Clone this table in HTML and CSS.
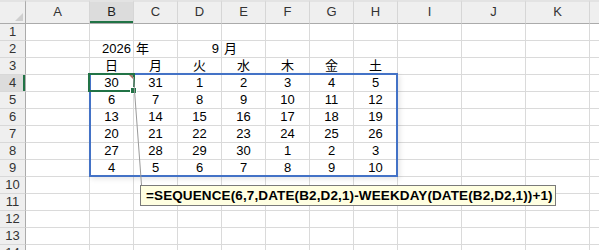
FILE: index.html
```html
<!DOCTYPE html>
<html lang="ja">
<head>
<meta charset="utf-8">
<title>SEQUENCE カレンダー</title>
<link rel="stylesheet" href="styles.css">
</head>
<body>
<div class="sheet">
  <div class="row head">
    <div class="c corner"><span class="tri"></span></div>
    <div class="c">A</div><div class="c sel-col">B</div><div class="c">C</div><div class="c">D</div><div class="c">E</div><div class="c">F</div><div class="c">G</div><div class="c">H</div><div class="c">I</div><div class="c">J</div><div class="c">K</div><div class="c"></div>
  </div>
  <div class="row"><div class="c rh">1</div><div class="c"></div><div class="c"></div><div class="c"></div><div class="c"></div><div class="c"></div><div class="c"></div><div class="c"></div><div class="c"></div><div class="c"></div><div class="c"></div><div class="c"></div><div class="c"></div></div>
  <div class="row"><div class="c rh">2</div><div class="c"></div><div class="c r">2026</div><div class="c l">年</div><div class="c r">9</div><div class="c l">月</div><div class="c"></div><div class="c"></div><div class="c"></div><div class="c"></div><div class="c"></div><div class="c"></div><div class="c"></div></div>
  <div class="row"><div class="c rh">3</div><div class="c"></div><div class="c m">日</div><div class="c m">月</div><div class="c m">火</div><div class="c m">水</div><div class="c m">木</div><div class="c m">金</div><div class="c m">土</div><div class="c"></div><div class="c"></div><div class="c"></div><div class="c"></div></div>
  <div class="row"><div class="c rh sel-row">4</div><div class="c"></div><div class="c m">30</div><div class="c m">31</div><div class="c m">1</div><div class="c m">2</div><div class="c m">3</div><div class="c m">4</div><div class="c m">5</div><div class="c"></div><div class="c"></div><div class="c"></div><div class="c"></div></div>
  <div class="row"><div class="c rh">5</div><div class="c"></div><div class="c m">6</div><div class="c m">7</div><div class="c m">8</div><div class="c m">9</div><div class="c m">10</div><div class="c m">11</div><div class="c m">12</div><div class="c"></div><div class="c"></div><div class="c"></div><div class="c"></div></div>
  <div class="row"><div class="c rh">6</div><div class="c"></div><div class="c m">13</div><div class="c m">14</div><div class="c m">15</div><div class="c m">16</div><div class="c m">17</div><div class="c m">18</div><div class="c m">19</div><div class="c"></div><div class="c"></div><div class="c"></div><div class="c"></div></div>
  <div class="row"><div class="c rh">7</div><div class="c"></div><div class="c m">20</div><div class="c m">21</div><div class="c m">22</div><div class="c m">23</div><div class="c m">24</div><div class="c m">25</div><div class="c m">26</div><div class="c"></div><div class="c"></div><div class="c"></div><div class="c"></div></div>
  <div class="row"><div class="c rh">8</div><div class="c"></div><div class="c m">27</div><div class="c m">28</div><div class="c m">29</div><div class="c m">30</div><div class="c m">1</div><div class="c m">2</div><div class="c m">3</div><div class="c"></div><div class="c"></div><div class="c"></div><div class="c"></div></div>
  <div class="row"><div class="c rh">9</div><div class="c"></div><div class="c m">4</div><div class="c m">5</div><div class="c m">6</div><div class="c m">7</div><div class="c m">8</div><div class="c m">9</div><div class="c m">10</div><div class="c"></div><div class="c"></div><div class="c"></div><div class="c"></div></div>
  <div class="row"><div class="c rh">10</div><div class="c"></div><div class="c"></div><div class="c"></div><div class="c"></div><div class="c"></div><div class="c"></div><div class="c"></div><div class="c"></div><div class="c"></div><div class="c"></div><div class="c"></div><div class="c"></div></div>
  <div class="row"><div class="c rh">11</div><div class="c"></div><div class="c"></div><div class="c"></div><div class="c"></div><div class="c"></div><div class="c"></div><div class="c"></div><div class="c"></div><div class="c"></div><div class="c"></div><div class="c"></div><div class="c"></div></div>
  <div class="row"><div class="c rh">12</div><div class="c"></div><div class="c"></div><div class="c"></div><div class="c"></div><div class="c"></div><div class="c"></div><div class="c"></div><div class="c"></div><div class="c"></div><div class="c"></div><div class="c"></div><div class="c"></div></div>
  <div class="row"><div class="c rh">13</div><div class="c"></div><div class="c"></div><div class="c"></div><div class="c"></div><div class="c"></div><div class="c"></div><div class="c"></div><div class="c"></div><div class="c"></div><div class="c"></div><div class="c"></div><div class="c"></div></div>
  <div class="row"><div class="c rh">14</div><div class="c"></div><div class="c"></div><div class="c"></div><div class="c"></div><div class="c"></div><div class="c"></div><div class="c"></div><div class="c"></div><div class="c"></div><div class="c"></div><div class="c"></div><div class="c"></div></div>

  <div class="spill"></div>
  <div class="selbox"></div>
  <div class="handle"></div>
  <svg class="callout" width="20" height="120" viewBox="0 0 20 120">
    <polygon points="1,2 5,2 5,6" fill="#b0705a"/>
    <polygon points="3,2 5,2 5,4" fill="#8c8c8c"/>
    <line x1="5.5" y1="4" x2="13.5" y2="112" stroke="#9a9a9a" stroke-width="1"/>
  </svg>
  <div class="tip">=SEQUENCE(6,7,DATE(B2,D2,1)-WEEKDAY(DATE(B2,D2,1))+1)</div>
</div>
</body>
</html>
```

FILE: styles.css
```css
html, body {
  margin: 0;
  padding: 0;
  background: #ffffff;
  overflow: hidden;
}

.sheet {
  position: relative;
  width: 660px;
  height: 250px;
  font-family: "Liberation Sans", "Noto Sans CJK JP", sans-serif;
  font-size: 13px;
  color: #000;
}

.row {
  display: grid;
  grid-template-columns: 26px 64px repeat(7, 44px) 64px 64px 64px 64px;
  height: 17px;
}

.c {
  box-sizing: border-box;
  border-right: 1px solid #dadada;
  border-bottom: 1px solid #dadada;
  height: 17px;
  line-height: 16px;
  white-space: nowrap;
  overflow: visible;
}

.c.m { text-align: center; }
.c.r { text-align: right; padding-right: 2px; }
.c.l { text-align: left; padding-left: 2px; }

.head {
  height: 24px;
}

.head .c {
  height: 24px;
  background: #efefef;
  border-top: 2px solid #e3e3e3;
  border-bottom: 1px solid #ababab;
  border-right: 1px solid #d6d6d6;
  text-align: center;
  line-height: 20px;
  color: #333;
  font-size: 13px;
}

.head .corner {
  position: relative;
  border-right: 1px solid #ababab;
}

.tri {
  position: absolute;
  right: 2px;
  bottom: 2px;
  width: 0;
  height: 0;
  border-left: 8px solid transparent;
  border-bottom: 8px solid #cfcfcf;
}

.head .sel-col {
  background: #dcdcdc;
  box-shadow: inset 0 -2px 0 #217346;
  color: #1e1e1e;
}

.rh {
  background: #efefef;
  border-right: 1px solid #ababab;
  border-bottom: 1px solid #d8d8d8;
  text-align: center;
  color: #333;
}

.rh.sel-row {
  background: #dcdcdc;
  box-shadow: inset -2px 0 0 #217346;
}

.spill {
  position: absolute;
  left: 89px;
  top: 73px;
  width: 309px;
  height: 104px;
  box-sizing: border-box;
  border: 2px solid #4372c6;
  box-shadow: 2px 2px 5px rgba(0, 0, 0, 0.10);
}

.selbox {
  position: absolute;
  left: 88px;
  top: 73px;
  width: 47px;
  height: 19px;
  box-sizing: border-box;
  border: 2px solid #217346;
}

.handle {
  position: absolute;
  left: 131px;
  top: 88px;
  width: 5px;
  height: 5px;
  background: #217346;
  box-shadow: 0 0 0 1px #ffffff;
}

.callout {
  position: absolute;
  left: 128px;
  top: 73px;
}

.tip {
  position: absolute;
  left: 140px;
  top: 185px;
  width: 416px;
  height: 21px;
  box-sizing: border-box;
  background: #ffffe1;
  border: 1px solid #7a7a7a;
  padding-left: 5px;
  line-height: 19px;
  font-family: "Liberation Sans", sans-serif;
  font-weight: bold;
  font-size: 13.5px;
  letter-spacing: 0.12px;
  color: #000;
  white-space: nowrap;
}
```
